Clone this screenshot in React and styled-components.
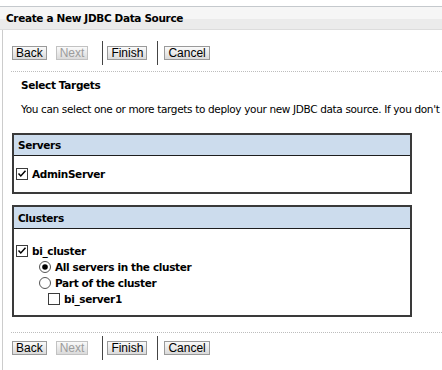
import { createGlobalStyle, styled } from "styled-components";

const GlobalStyle = createGlobalStyle`
  body {
    margin: 0;
    background: #ffffff;
    font-family: "DejaVu Sans", Tahoma, sans-serif;
    letter-spacing: -0.35px;
    color: #000;
  }
`;

const Page = styled.div`
  width: 442px;
  height: 370px;
  overflow: hidden;
  padding-top: 6px;
  box-sizing: border-box;
`;

const TitleBar = styled.div`
  border-top: 1px solid #c5c9cd;
  border-bottom: 1px solid #dcdcdc;
  height: 22px;
  padding-left: 6px;
  display: flex;
  align-items: center;
  background: linear-gradient(#f6f6f6 0%, #f6f6f6 55%, #ebebeb 55%, #ebebeb 100%);
  font-weight: bold;
  font-size: 10.5px;
  white-space: nowrap;
`;

const Body = styled.div`
  margin-left: 2px;
  border-left: 1px solid #cccccc;
  padding-left: 9px;
  height: 340px;
`;

const ButtonBar = styled.div`
  display: flex;
  align-items: center;
  height: ${({ $h }) => $h}px;
  padding-top: ${({ $pt }) => $pt || 0}px;
`;

const Button = styled.button`
  font-family: "Liberation Sans", Arial, sans-serif;
  letter-spacing: 0;
  font-size: 12px;
  line-height: 12px;
  height: 14px;
  padding: 0 3px;
  margin: 0 0 0 ${({ $ml }) => $ml || 0}px;
  border: 1px solid #9a9a9a;
  border-radius: 0;
  background: linear-gradient(#fafafa, #dadada);
  color: ${({ disabled }) => (disabled ? "#9c9c9c" : "#000")};
  border-color: ${({ disabled }) => (disabled ? "#c2c2c2" : "#9a9a9a")};
`;

const Divider = styled.span`
  display: block;
  width: 1px;
  height: 24px;
  background: #444;
  margin-left: ${({ $ml }) => $ml}px;
`;

const Dotted = styled.div`
  border-top: 1px dotted #bdbdbd;
  margin-left: -1px;
  margin-top: ${({ $mt }) => $mt || 0}px;
`;

const Heading = styled.div`
  font-weight: bold;
  font-size: 10.5px;
  padding-left: 9px;
  margin-top: 6px;
  line-height: 14px;
`;

const Desc = styled.div`
  font-size: 10.5px;
  padding-left: 9px;
  margin-top: 10px;
  line-height: 14px;
  white-space: nowrap;
`;

const Table = styled.div`
  width: 396px;
  border: 2px solid #3a3a3a;
  margin-top: ${({ $mt }) => $mt}px;
`;

const TableHead = styled.div`
  background: #ccdced;
  height: ${({ $h }) => $h || 20}px;
  border-bottom: 1px solid #1e1e1e;
  padding-left: 4px;
  display: flex;
  align-items: center;
  font-weight: bold;
  font-size: 10.5px;
`;

const TableBody = styled.div`
  height: ${({ $h }) => $h}px;
  padding-top: ${({ $pt }) => $pt}px;
  box-sizing: border-box;
`;

const Row = styled.div`
  display: flex;
  align-items: center;
  gap: 4px;
  height: 16px;
  padding-left: ${({ $indent }) => $indent}px;
  font-weight: bold;
  font-size: 10.5px;
  white-space: nowrap;
`;

function Checkbox({ checked }) {
  return (
    <svg width="12" height="12" viewBox="0 0 12 12">
      <rect x="0.5" y="0.5" width="11" height="11" fill="#fff" stroke="#3c3c3c" />
      {checked && (
        <path d="M2.5 5.5 L4.8 8 L9.5 2.8" fill="none" stroke="#000" strokeWidth="1.5" />
      )}
    </svg>
  );
}

function Radio({ checked }) {
  return (
    <svg width="12" height="12" viewBox="0 0 12 12">
      <circle cx="6" cy="6" r="5.5" fill="#fff" stroke="#555" />
      {checked && <circle cx="6" cy="6" r="2.8" fill="#000" />}
    </svg>
  );
}

function Buttons() {
  return (
    <>
      <Button>Back</Button>
      <Button disabled $ml={9}>Next</Button>
      <Divider $ml={14} />
      <Button $ml={4}>Finish</Button>
      <Divider $ml={10} />
      <Button $ml={6}>Cancel</Button>
    </>
  );
}

export default function App() {
  return (
    <Page>
      <GlobalStyle />
      <TitleBar>Create a New JDBC Data Source</TitleBar>
      <Body>
        <ButtonBar $h={37} $pt={4}>
          <Buttons />
        </ButtonBar>
        <Dotted />
        <Heading>Select Targets</Heading>
        <Desc>You can select one or more targets to deploy your new JDBC data source. If you don't</Desc>
        <Table $mt={17}>
          <TableHead>Servers</TableHead>
          <TableBody $h={36} $pt={10}>
            <Row $indent={2}>
              <Checkbox checked />
              AdminServer
            </Row>
          </TableBody>
        </Table>
        <Table $mt={11}>
          <TableHead $h={21}>Clusters</TableHead>
          <TableBody $h={86} $pt={14}>
            <Row $indent={2}>
              <Checkbox checked />
              bi_cluster
            </Row>
            <Row $indent={25}>
              <Radio checked />
              All servers in the cluster
            </Row>
            <Row $indent={25}>
              <Radio />
              Part of the cluster
            </Row>
            <Row $indent={34}>
              <Checkbox />
              bi_server1
            </Row>
          </TableBody>
        </Table>
        <Dotted $mt={15} />
        <ButtonBar $h={29}>
          <Buttons />
        </ButtonBar>
      </Body>
    </Page>
  );
}
